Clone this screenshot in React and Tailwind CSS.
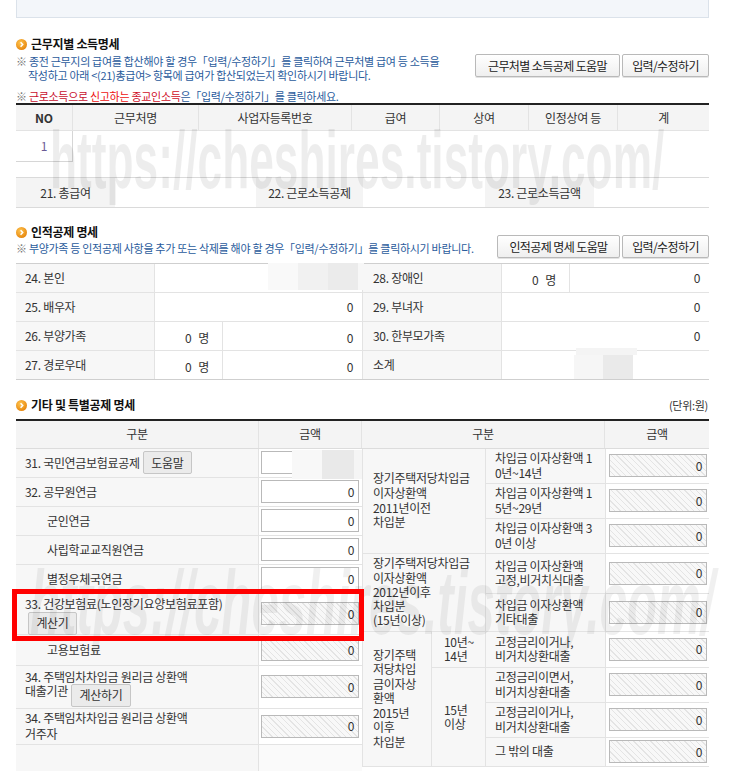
import React from "react";

// 연말정산 - 근무지별 / 인적공제 / 기타 및 특별공제 명세 화면

const Bullet = () => (
  <svg width="11" height="11" viewBox="0 0 11 11" className="shrink-0">
    <defs>
      <radialGradient id="orb" cx="40%" cy="35%" r="70%">
        <stop offset="0" stopColor="#ffc550" />
        <stop offset="1" stopColor="#e5830a" />
      </radialGradient>
    </defs>
    <circle cx="5.5" cy="5.5" r="5.5" fill="url(#orb)" />
    <path d="M4.6 3.3 L6.7 5.5 L4.6 7.7" fill="none" stroke="#fff" strokeWidth="1.5" />
  </svg>
);

const Heading = ({ children }) => (
  <div className="flex items-center h-[16px]">
    <Bullet />
    <span className="ml-[4px] text-[12px] font-bold text-[#111]">{children}</span>
  </div>
);

const Btn = ({ children, className = "" }) => (
  <button
    className={`h-[23px] border border-[#b9b9b9] rounded-[2px] bg-linear-to-b from-white to-[#efefef] text-[12px] text-[#222] tracking-[-0.6px] shadow-[0_1px_0_#e2e2e2] ${className}`}
  >
    {children}
  </button>
);

const GrayBtn = ({ children, className = "" }) => (
  <button
    className={`h-[23px] border border-[#c6c6c6] rounded-[2px] bg-[#ebebeb] text-[12px] text-[#333] shrink-0 ${className}`}
  >
    {children}
  </button>
);

const Amt = ({ hatched, value = "0", w = "w-[98px]" }) => (
  <div
    className={`${w} h-[23px] border border-[#b9b9b9] flex items-center justify-end pr-[4px] text-[12px] text-[#333] ${
      hatched
        ? "bg-[repeating-linear-gradient(45deg,#f8f8f8_0px,#f8f8f8_3px,#e4e4e4_3px,#e4e4e4_4px)]"
        : "bg-white"
    }`}
  >
    {value}
  </div>
);

const Note = ({ children, className = "" }) => (
  <div className={`text-[11px] leading-[14px] text-[#2a5b9c] ${className}`}>{children}</div>
);

const Mark = () => <span className="text-[#777]">※ </span>;

const LRow = ({ h, children, amt, cls = "items-center" }) => (
  <div className={`flex ${h} border-b border-[#e3e3e3]`}>
    <div className={`w-[243px] bg-[#f7f7f7] border-r border-[#e3e3e3] pl-[9px] flex ${cls}`}>{children}</div>
    <div className="flex-1 flex items-center pl-[2px]">{amt}</div>
  </div>
);

const SubRow = ({ h, children }) => (
  <div className={`flex ${h} border-b border-[#e3e3e3]`}>
    <div className="w-[120px] bg-[#f7f7f7] border-r border-[#e3e3e3] pl-[9px] flex flex-col justify-center leading-[14.5px]">
      {children}
    </div>
    <div className="flex-1 flex items-center pl-[3px]">
      <Amt hatched />
    </div>
  </div>
);

const Count = () => (
  <div className="w-[68px] border-r border-[#e3e3e3] flex items-center justify-end pr-[13px] pt-[4px]">
    0<span className="ml-[7px]">명</span>
  </div>
);

export default function App() {
  return (
    <div className="relative w-[742px] h-[771px] overflow-hidden bg-white pl-[16px] font-['Noto_Sans_CJK_KR','Noto_Sans',sans-serif] text-[12px] text-[#333] tracking-[-0.3px]">
      <div className="w-[693px]">
        {/* 상단 요약 박스 (잘린 부분) */}
        <div className="h-[18px] bg-[#f3f6fa] border-x border-b border-[#dbe2ea]" />

        {/* 근무지별 소득명세 */}
        <div className="mt-[18px]">
          <Heading>근무지별 소득명세</Heading>
        </div>
        <div className="mt-[2px] flex justify-between items-start">
          <Note>
            <Mark />종전 근무지의 급여를 합산해야 할 경우「입력/수정하기」를 클릭하여 근무처별 급여 등 소득을
            <br />
            <span className="pl-[12px]">작성하고 아래 &lt;(21)총급여&gt; 항목에 급여가 합산되었는지 확인하시기 바랍니다.</span>
          </Note>
          <div className="flex gap-[2px] shrink-0">
            <Btn className="w-[145px]">근무처별 소득공제 도움말</Btn>
            <Btn className="w-[87px]">입력/수정하기</Btn>
          </div>
        </div>
        <Note className="mt-[7px]">
          <Mark />
          <span className="text-[#c8102e]">근로소득으로 </span>
          <span className="text-[#ee1111]">신고하는 </span>
          <span className="text-[#d0102a]">종교인소득</span>은「입력/수정하기」를 클릭하세요.
        </Note>

        <div className="border-t-2 border-[#222]">
          <div className="flex h-[26px] bg-[#f4f4f4] border-b border-[#e3e3e3] text-[#333]">
            <div className="w-[57px] border-r border-[#e3e3e3] flex items-center justify-center font-bold tracking-normal">NO</div>
            <div className="w-[126px] border-r border-[#e3e3e3] flex items-center justify-center">근무처명</div>
            <div className="w-[153px] border-r border-[#e3e3e3] flex items-center justify-center">사업자등록번호</div>
            <div className="w-[88px] border-r border-[#e3e3e3] flex items-center justify-center">급여</div>
            <div className="w-[89px] border-r border-[#e3e3e3] flex items-center justify-center">상여</div>
            <div className="w-[89px] border-r border-[#e3e3e3] flex items-center justify-center">인정상여 등</div>
            <div className="flex-1 flex items-center justify-center">계</div>
          </div>
          <div className="flex h-[31px]">
            <div className="w-[57px] border-r border-b border-[#d6d6d6] flex items-center justify-center text-[#6b5b95]">1</div>
            <div className="flex-1" />
          </div>
        </div>

        <div className="mt-[15px] flex h-[31px] border-y border-[#dadada]">
          <div className="w-[99px] bg-[#f4f4f4] flex items-center justify-center">21. 총급여</div>
          <div className="w-[141px]" />
          <div className="w-[107px] bg-[#f4f4f4] flex items-center justify-center">22. 근로소득공제</div>
          <div className="w-[122px]" />
          <div className="w-[109px] bg-[#f4f4f4] flex items-center justify-center">23. 근로소득금액</div>
          <div className="flex-1" />
        </div>

        {/* 인적공제 명세 */}
        <div className="mt-[16px] flex justify-between items-end">
          <div>
            <Heading>인적공제 명세</Heading>
            <Note className="mt-[1px] pb-[3px]">
              <Mark />부양가족 등 인적공제 사항을 추가 또는 삭제를 해야 할 경우「입력/수정하기」를 클릭하시기 바랍니다.
            </Note>
          </div>
          <div className="flex gap-[2px] shrink-0">
            <Btn className="w-[123px]">인적공제 명세 도움말</Btn>
            <Btn className="w-[87px]">입력/수정하기</Btn>
          </div>
        </div>

        <div className="mt-[5px] border-t border-b border-[#cfcfcf]">
          {[
            { l: "24. 본인", r: "28. 장애인", left: "blank", right: "count" },
            { l: "25. 배우자", r: "29. 부녀자", left: "value", right: "value" },
            { l: "26. 부양가족", r: "30. 한부모가족", left: "count", right: "value" },
            { l: "27. 경로우대", r: "소계", left: "count", right: "blank" },
          ].map((row, i) => (
            <div key={row.l} className={`flex ${i < 3 ? "h-[29px] border-b border-[#e3e3e3]" : "h-[28px]"}`}>
              <div className="w-[139px] bg-[#f7f7f7] border-r border-[#e3e3e3] pl-[9px] flex items-center">{row.l}</div>
              {row.left === "count" ? (
                <>
                  <Count />
                  <div className="w-[139px] flex items-center justify-end pr-[9px] pt-[4px]">0</div>
                </>
              ) : row.left === "value" ? (
                <div className="w-[207px] flex items-center justify-end pr-[9px]">0</div>
              ) : (
                <div className="w-[207px] relative">
                  <div className="absolute left-[113px] -top-[1px] flex h-[27px]">
                    <div className="w-[30px] bg-[#f9f9f9]" />
                    <div className="w-[30px] bg-[#f1f1f1]" />
                    <div className="w-[30px] bg-[#ebebeb]" />
                    <div className="w-[6px] bg-[#f7f7f7]" />
                  </div>
                </div>
              )}
              <div className="w-[140px] bg-[#f7f7f7] border-x border-[#e3e3e3] pl-[10px] flex items-center">{row.r}</div>
              {row.right === "count" ? (
                <>
                  <Count />
                  <div className="flex-1 flex items-center justify-end pr-[9px]">0</div>
                </>
              ) : row.right === "value" ? (
                <div className="flex-1 flex items-center justify-end pr-[9px]">0</div>
              ) : (
                <div className="flex-1 relative">
                  <div className="absolute left-[74px] top-[-3px] w-[61px] h-[7px] bg-[#f4f4f4]" />
                  <div className="absolute left-[72px] top-[4px] flex h-[24px]">
                    <div className="w-[29px] bg-[#f6f6f6]" />
                    <div className="w-[30px] bg-[#eaeaea]" />
                  </div>
                </div>
              )}
            </div>
          ))}
        </div>

        {/* 기타 및 특별공제 명세 */}
        <div className="mt-[17px] flex justify-between items-center">
          <Heading>기타 및 특별공제 명세</Heading>
          <span className="text-[11px] text-[#333] pr-[1px]">(단위:원)</span>
        </div>

        <div className="mt-[5px] border-t-2 border-[#222]">
          <div className="flex h-[28px] bg-[#f4f4f4] border-b border-[#dcdcdc]">
            <div className="w-[243px] border-r border-[#e3e3e3] flex items-center justify-center">구분</div>
            <div className="w-[103px] border-r border-[#e3e3e3] flex items-center justify-center">금액</div>
            <div className="w-[243px] border-r border-[#e3e3e3] flex items-center justify-center">구분</div>
            <div className="flex-1 flex items-center justify-center">금액</div>
          </div>

          <div className="flex">
            {/* 왼쪽 */}
            <div className="w-[346px]">
              <LRow
                h="h-[29px]"
                amt={
                  <div className="relative">
                    <Amt value="" />
                    <div className="absolute left-[31px] -top-[1px] flex h-[29px]">
                      <div className="w-[30px] bg-[#f8f8f8]" />
                      <div className="w-[32px] bg-[#e9e9e9]" />
                      <div className="w-[8px] bg-[#f5f5f5]" />
                    </div>
                  </div>
                }
              >
                <span>31. 국민연금보험료공제</span>
                <GrayBtn className="ml-[3px] w-[49px]">도움말</GrayBtn>
              </LRow>
              <LRow h="h-[29px]" amt={<Amt />}>32. 공무원연금</LRow>
              <LRow h="h-[29px]" amt={<Amt />}>
                <span className="pl-[22px]">군인연금</span>
              </LRow>
              <LRow h="h-[29px]" amt={<Amt />}>
                <span className="pl-[22px]">사립학교교직원연금</span>
              </LRow>
              <LRow h="h-[29px]" amt={<Amt />}>
                <span className="pl-[22px]">별정우체국연금</span>
              </LRow>
              <LRow h="h-[41px]" cls="flex-col justify-start pt-[2px]" amt={<Amt hatched />}>
                <span className="leading-[15px]">33. 건강보험료(노인장기요양보험료포함)</span>
                <GrayBtn className="mt-[1px] ml-[3px] w-[49px]">계산기</GrayBtn>
              </LRow>
              <LRow h="h-[31px]" amt={<Amt hatched />}>
                <span className="pl-[22px]">고용보험료</span>
              </LRow>
              <LRow h="h-[43px]" cls="flex-col justify-start pt-[4px]" amt={<Amt hatched />}>
                <span className="leading-[14px]">34. 주택임차차입금 원리금 상환액</span>
                <div className="flex items-start">
                  <span className="leading-[14px]">대출기관</span>
                  <GrayBtn className="ml-[3px] w-[60px]">계산하기</GrayBtn>
                </div>
              </LRow>
              <LRow h="h-[36px]" cls="flex-col justify-center leading-[16px]" amt={<Amt hatched />}>
                <span>34. 주택임차차입금 원리금 상환액</span>
                <span>거주자</span>
              </LRow>
              <div className="flex h-[40px]">
                <div className="w-[243px] bg-[#f7f7f7] border-r border-[#e3e3e3]" />
                <div className="flex-1 bg-[#fafafa]" />
              </div>
            </div>

            {/* 오른쪽 */}
            <div className="w-[347px] border-l border-[#e3e3e3] self-start">
              <div className="flex">
                <div className="w-[123px] bg-[#f7f7f7] border-r border-b border-[#e3e3e3] pl-[10px] flex flex-col justify-center leading-[14.7px]">
                  <span>장기주택저당차입금</span>
                  <span>이자상환액</span>
                  <span>2011년이전</span>
                  <span>차입분</span>
                </div>
                <div className="flex-1">
                  <SubRow h="h-[35px]">
                    <span>차입금 이자상환액 1</span>
                    <span>0년~14년</span>
                  </SubRow>
                  <SubRow h="h-[35px]">
                    <span>차입금 이자상환액 1</span>
                    <span>5년~29년</span>
                  </SubRow>
                  <SubRow h="h-[35px]">
                    <span>차입금 이자상환액 3</span>
                    <span>0년 이상</span>
                  </SubRow>
                </div>
              </div>

              <div className="flex">
                <div className="w-[123px] bg-[#f7f7f7] border-r border-b border-[#e3e3e3] pl-[10px] flex flex-col justify-center leading-[14.3px]">
                  <span>장기주택저당차입금</span>
                  <span>이자상환액</span>
                  <span>2012년이후</span>
                  <span>차입분</span>
                  <span>(15년이상)</span>
                </div>
                <div className="flex-1">
                  <SubRow h="h-[40px]">
                    <span>차입금 이자상환액</span>
                    <span>고정,비거치식대출</span>
                  </SubRow>
                  <SubRow h="h-[38px]">
                    <span>차입금 이자상환액</span>
                    <span>기타대출</span>
                  </SubRow>
                </div>
              </div>

              <div className="flex">
                <div className="w-[69px] bg-[#f7f7f7] border-r border-b border-[#e3e3e3] pl-[10px] flex flex-col justify-center leading-[14.5px]">
                  <span>장기주택</span>
                  <span>저당차입</span>
                  <span>금이자상</span>
                  <span>환액</span>
                  <span>2015년</span>
                  <span>이후</span>
                  <span>차입분</span>
                </div>
                <div className="flex-1">
                  <div className="flex">
                    <div className="w-[54px] bg-[#f7f7f7] border-r border-b border-[#e3e3e3] pl-[12px] flex flex-col justify-center leading-[14px]">
                      <span>10년~</span>
                      <span>14년</span>
                    </div>
                    <div className="flex-1">
                      <SubRow h="h-[36px]">
                        <span>고정금리이거나,</span>
                        <span>비거치상환대출</span>
                      </SubRow>
                    </div>
                  </div>
                  <div className="flex">
                    <div className="w-[54px] bg-[#f7f7f7] border-r border-b border-[#e3e3e3] pl-[12px] flex flex-col justify-center leading-[14px]">
                      <span>15년</span>
                      <span>이상</span>
                    </div>
                    <div className="flex-1">
                      <SubRow h="h-[35px]">
                        <span>고정금리이면서,</span>
                        <span>비거치상환대출</span>
                      </SubRow>
                      <SubRow h="h-[35px]">
                        <span>고정금리이거나,</span>
                        <span>비거치상환대출</span>
                      </SubRow>
                      <SubRow h="h-[29px]">
                        <span>그 밖의 대출</span>
                      </SubRow>
                    </div>
                  </div>
                </div>
              </div>
            </div>
          </div>
        </div>
      </div>

      {/* 워터마크 */}
      <div className="pointer-events-none absolute left-[50px] top-[119px] origin-top-left scale-x-[0.82] scale-y-150 whitespace-nowrap text-[54px] leading-none font-bold tracking-normal text-black/[0.07] font-['Liberation_Sans',sans-serif]">
        https://cheshires.tistory.com/
      </div>
      <div className="pointer-events-none absolute left-[30px] top-[559px] origin-top-left scale-x-[0.82] scale-y-150 whitespace-nowrap text-[60px] leading-none font-bold italic tracking-normal text-black/[0.06] font-['Liberation_Sans',sans-serif]">
        https://cheshires.tistory.com/
      </div>

      {/* 강조 표시 */}
      <div className="pointer-events-none absolute left-[12px] top-[589px] w-[352px] h-[52px] border-[5px] border-[#ff0000]" />
    </div>
  );
}
